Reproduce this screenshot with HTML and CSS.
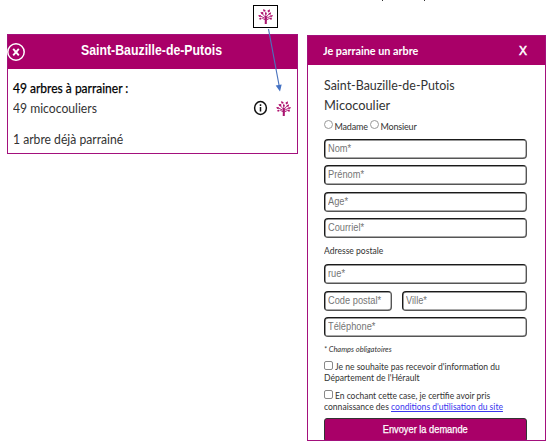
FILE: index.html
```html
<!DOCTYPE html>
<html lang="fr">
<head>
<meta charset="utf-8">
<title>Je parraine un arbre</title>
<link rel="stylesheet" href="styles.css">
</head>
<body>
<svg width="0" height="0" class="defs">
  <symbol id="tree" viewBox="0 0 16 17">
    <path d="M8.3 16V8M8 12.4 4.4 10.2M8.3 9.6 4.6 5.6M8.3 8V3.5M8.5 9.6 11.8 5.6M8.5 12.6 12.4 10.4M8.3 10.8 2.5 7.9M8.3 10.8 13.8 7.9" fill="none" stroke="#a9136f" stroke-width=".9"/>
    <path d="M7.3 8h2v8.4H7.2z" fill="#a9136f"/>
    <path d="M5.6.6 8.1 1.8 7.5 3.5 5.6 2.9zM10 2.4 12.6.8 12.7 3.2 11 4.2zM2.5 4 5.5 3.8 5.7 6.2 3.8 6.1zM11.4 5.1 14 4 13.6 6.3 11.8 6.7zM.2 7.2 2.6 6.8 3.4 8.5 1.3 8.9zM13 7.4 15.9 6.9 15.1 8.8 13.4 9zM.9 10.8 3.2 9.6 3.9 11.1 2.2 12zM12 10.2 14.5 9.6 14.9 11.6 12.9 11.7zM7.4 4.4 9.4 4.7 8.9 6.6 7.6 6.3z" fill="#b0146f"/>
  </symbol>
</svg>
<div class="canvas">
  <i class="mark mark-a"></i><i class="mark mark-b"></i>
  <section class="card summary">
    <header class="summary-head">
      <svg class="close" viewBox="0 0 20 20"><circle cx="10" cy="10" r="8.2" fill="none" stroke="#fff" stroke-width="1.5"/><path d="m7.2 6.8 5.6 6.6m0-6.6-5.6 6.6" stroke="#fff" stroke-width="1.9"/></svg>
      <h1><span class="fit w88">Saint-Bauzille-de-Putois</span></h1>
    </header>
    <div class="summary-body">
      <p class="strong"><span class="fit w89">49 arbres à parrainer :</span></p>
      <div class="species">
        <p><span class="fit w90">49 micocouliers</span></p>
        <svg class="info" viewBox="0 0 14 16"><ellipse cx="7" cy="8" rx="5.9" ry="6.5" fill="none" stroke="#111" stroke-width="1.5"/><path d="M7 7v4.6M7 4.3v1.6" stroke="#111" stroke-width="1.5"/></svg>
        <svg class="tree"><use href="#tree"/></svg>
      </div>
      <p class="done"><span class="fit w90">1 arbre déjà parrainé</span></p>
    </div>
  </section>
  <section class="card panel">
    <header class="panel-head"><h2><span class="fit w94">Je parraine un arbre</span></h2><b>X</b></header>
    <form class="form">
      <p class="place"><span class="fit w92">Saint-Bauzille-de-Putois</span></p>
      <p class="place"><span class="fit w95">Micocoulier</span></p>
      <div class="civility"><i class="radio"></i><span>Madame</span><i class="radio"></i><span>Monsieur</span></div>
      <div class="fields">
        <div class="field"><span class="fit w90">Nom*</span></div>
        <div class="field"><span class="fit w90">Prénom*</span></div>
        <div class="field"><span class="fit w90">Age*</span></div>
        <div class="field"><span class="fit w90">Courriel*</span></div>
      </div>
      <p class="address"><span class="fit w95">Adresse postale</span></p>
      <div class="fields">
        <div class="field"><span class="fit w90">rue*</span></div>
        <div class="split"><div class="field"><span class="fit w90">Code postal*</span></div><div class="field"><span class="fit w90">Ville*</span></div></div>
        <div class="field"><span class="fit w90">Téléphone*</span></div>
      </div>
      <p class="required">* Champs obligatoires</p>
      <div class="consent"><p><i class="check"></i><span class="fit w95">Je ne souhaite pas recevoir d'information du</span></p><p><span class="fit w95">Département de l'Hérault</span></p></div>
      <div class="consent"><p><i class="check"></i><span class="fit w94">En cochant cette case, je certifie avoir pris</span></p><p><span class="fit w95">connaissance des <a>conditions d'utilisation du site</a></span></p></div>
      <div class="submit"><span>Envoyer la demande</span></div>
    </form>
  </section>
  <div class="callout"><svg class="tree"><use href="#tree"/></svg></div>
  <svg class="arrow" viewBox="0 0 20 66"><path d="M2.5 1 13 57" stroke="#4a73bd" stroke-width="1.1"/><path d="m9.7 57.5 6-1.1-1.7 7z" fill="#4472c4"/></svg>
</div>
</body>
</html>
```
FILE: styles.css
```css
* { box-sizing: border-box; }
body { margin: 0; background: #fff; color: #333; font-family: Lato, "Liberation Sans", sans-serif; }
h1, h2, p { margin: 0; font-weight: 400; white-space: nowrap; }
svg { display: block; }
.fit { display: inline-block; transform-origin: 0 50%; white-space: nowrap; }
.w88 { transform: scaleX(.88); }
.w89 { transform: scaleX(.89); }
.w90 { transform: scaleX(.9); }
.w92 { transform: scaleX(.92); }
.w94 { transform: scaleX(.94); }
.w95 { transform: scaleX(.95); }
.defs { position: absolute; }
.canvas { position: relative; width: 553px; height: 448px; overflow: hidden; display: flex; align-items: flex-start; gap: 9px; padding: 34px 0 0 7px; }
.card { border: 1px solid #a3107c; background: #fff; flex: none; }
.mark { position: absolute; top: 0; width: 1px; height: 1px; background: #333; }
.mark-a { left: 382px; }
.mark-b { left: 424px; }

.summary { width: 291px; height: 120px; }
.summary-head { height: 34px; background: #a90068; display: flex; align-items: center; }
.close { width: 20px; height: 20px; margin-left: -2px; flex: none; }
.summary-head h1 { margin: -4px 0 0 55px; color: #fff; font: bold 14px/18px "Liberation Sans", sans-serif; }
.summary-body { padding: 9px 6px 0 5px; font-size: 13.5px; line-height: 20px; }
.strong { color: #000; -webkit-text-stroke: .25px #000; }
.species { display: flex; align-items: center; height: 20px; }
.species p { flex: 1; }
.info { width: 15px; height: 16px; margin-right: 8px; }
.tree { width: 15px; height: 17px; }
.done { margin-top: 11px; }

.panel { width: 239px; height: 406px; margin-top: 1px; overflow: hidden; }
.panel-head { height: 29px; padding: 0 18px 0 15px; background: #a90068; color: #fff; display: flex; justify-content: space-between; align-items: center; }
.panel-head h2 { font-size: 11.5px; font-weight: 700; }
.panel-head b { font: 12px "Liberation Sans", sans-serif; -webkit-text-stroke: .5px #fff; }
.form { padding: 11px 18px 0 16px; font-size: 9px; }
.place { font-size: 13.5px; line-height: 19.5px; }
.civility { display: flex; align-items: center; height: 16px; margin: 1.5px 0 6px; }
.radio { width: 9px; height: 9px; border: 1px solid #999; border-radius: 50%; margin-right: 1.5px; }
.civility span { margin-right: 2px; letter-spacing: -.16px; padding-top: 3px; }
.fields { display: flex; flex-direction: column; gap: 6.5px; }
.field { height: 20px; border: 1px solid #555; border-top: 1.6px solid #1a1a1a; border-left: 1.6px solid #1a1a1a; border-radius: 4px; box-shadow: inset .5px .5px 0 #333, inset -.4px -.4px 0 #555; padding-left: 3px; font: 10.3px/18px "Liberation Sans", sans-serif; color: #757575; }
.split { display: grid; grid-template-columns: 68px 1fr; gap: 10px; }
.address { line-height: 14px; margin: 6px 0; }
.required { font-size: 7.5px; font-style: italic; line-height: 11px; margin: 6.5px 0; }
.consent { line-height: 11px; margin-bottom: 6.5px; }
.check { display: inline-block; width: 9px; height: 9px; border: 1px solid #888; border-radius: 2px; margin-right: 1.5px; }
.consent a { color: #3a35ee; text-decoration: underline; }
.submit { height: 24px; border: 1px solid #333; border-radius: 3px; background: #a90068; color: #fff; text-align: center; font: 10.3px/21px "Liberation Sans", sans-serif; -webkit-text-stroke: .25px #fff; }
.submit span { display: inline-block; transform: scaleX(.9); }

.callout { position: absolute; left: 253px; top: 5px; width: 25px; height: 23px; border: 1px solid #000; background: #fff; display: flex; align-items: center; justify-content: center; }
.arrow { position: absolute; left: 266px; top: 28px; width: 20px; height: 66px; }
```
